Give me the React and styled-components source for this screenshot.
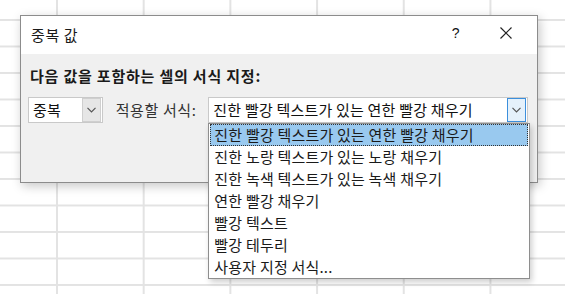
import React from 'react'
import styled, { createGlobalStyle } from 'styled-components'

const Global = createGlobalStyle`
    html, body {
        margin:0;
        padding:0;
        width:565px;
        height:294px;
        overflow:hidden;
        background:#fff;
    }
    * { box-sizing:border-box; }
`

const font = `"Noto Sans CJK KR", "Noto Sans", sans-serif`

const Sheet = styled.div`
    width:565px;
    height:294px;
    padding:15px 0 0 20px;
    background-color:#fff;
    background-image:
        linear-gradient(to right, #e3e3e3 2px, transparent 2px),
        linear-gradient(to bottom, #e3e3e3 2px, transparent 2px);
    background-size:86.7px 26.5px;
    background-position:56px 19px;
    font-family:${font};
    letter-spacing:0.6px;
`

const Dialog = styled.div`
    position:relative;
    width:518px;
    height:168px;
    border:1px solid #8c8c8c;
    background:#f0f0f0;
    box-shadow:2px 3px 10px rgba(0,0,0,0.22);
    display:flex;
    flex-direction:column;
`

const TitleBar = styled.div`
    height:38px;
    background:#fff;
    display:flex;
    align-items:center;
    padding:0 8px 0 10px;
`

const Title = styled.div`
    flex:1;
    font-size:15px;
    color:#1a1a1a;
    padding-bottom:1px;
`

const TitleButton = styled.div`
    width:${p => p.$w}px;
    height:38px;
    display:flex;
    align-items:center;
    justify-content:center;
    font-size:14px;
    color:#111;
    font-family:"Liberation Sans", sans-serif;
    padding-bottom:4px;
`

const Body = styled.div`
    padding:12px 9px 0 7px;
    display:flex;
    flex-direction:column;
`

const Heading = styled.div`
    font-size:15px;
    font-weight:bold;
    color:#1a1a1a;
    padding-left:2px;
    height:20px;
    line-height:20px;
    letter-spacing:0.8px;
`

const Row = styled.div`
    margin-top:11px;
    display:flex;
    align-items:center;
`

const Combo = styled.div`
    position:relative;
    width:${p => p.$w}px;
    height:26px;
    background:#fff;
    border:1px solid #c9c9c9;
    display:flex;
    align-items:center;
    padding:1px 1px 1px 4px;
`

const ComboText = styled.div`
    flex:1;
    font-size:15px;
    color:#111;
    white-space:nowrap;
    padding-bottom:1px;
    letter-spacing:0.2px;
`

const ArrowButton = styled.div`
    width:19px;
    height:24px;
    display:flex;
    align-items:center;
    justify-content:center;
    background:${p => (p.$hot ? '#e5f1fb' : '#e6e6e6')};
    border:1px solid ${p => (p.$hot ? '#3c8fdc' : '#cfcfcf')};
`

const Label = styled.div`
    width:106px;
    font-size:15px;
    color:#333;
    padding:0 0 1px 13px;
    white-space:nowrap;
`

const List = styled.div`
    position:absolute;
    top:25px;
    left:-1px;
    width:322px;
    background:#fff;
    border:1px solid #8e8e8e;
    box-shadow:2px 3px 6px rgba(0,0,0,0.2);
    padding:0 1px;
    z-index:2;
`

const Item = styled.div`
    height:22px;
    line-height:20px;
    font-size:15px;
    color:#1a1a1a;
    padding-left:3px;
    white-space:nowrap;
    letter-spacing:0.2px;
    background:${p => (p.$selected ? '#99c9ef' : 'transparent')};
    border:1px dotted ${p => (p.$selected ? '#333' : 'transparent')};
`

const Chevron = () => (
    <svg width="9" height="6" viewBox="0 0 9 6">
        <path d="M0.5 0.8 L4.5 4.8 L8.5 0.8" fill="none" stroke="#555" strokeWidth="1.2" />
    </svg>
)

const Close = () => (
    <svg width="12" height="12" viewBox="0 0 12 12">
        <path d="M0.5 0.5 L11.5 11.5 M11.5 0.5 L0.5 11.5" stroke="#222" strokeWidth="1.2" />
    </svg>
)

const items = [
    '진한 빨강 텍스트가 있는 연한 빨강 채우기',
    '진한 노랑 텍스트가 있는 노랑 채우기',
    '진한 녹색 텍스트가 있는 녹색 채우기',
    '연한 빨강 채우기',
    '빨강 텍스트',
    '빨강 테두리',
    '사용자 지정 서식...',
]

export default function App() {
    return (
        <>
            <Global />
            <Sheet>
                <Dialog>
                    <TitleBar>
                        <Title>중복 값</Title>
                        <TitleButton $w={54}>?</TitleButton>
                        <TitleButton $w={46}><Close /></TitleButton>
                    </TitleBar>
                    <Body>
                        <Heading>다음 값을 포함하는 셀의 서식 지정:</Heading>
                        <Row>
                            <Combo $w={75}>
                                <ComboText>중복</ComboText>
                                <ArrowButton><Chevron /></ArrowButton>
                            </Combo>
                            <Label>적용할 서식:</Label>
                            <Combo $w={321}>
                                <ComboText>{items[0]}</ComboText>
                                <ArrowButton $hot><Chevron /></ArrowButton>
                                <List>
                                    {items.map((t, i) => (
                                        <Item key={t} $selected={i === 0}>{t}</Item>
                                    ))}
                                </List>
                            </Combo>
                        </Row>
                    </Body>
                </Dialog>
            </Sheet>
        </>
    )
}
